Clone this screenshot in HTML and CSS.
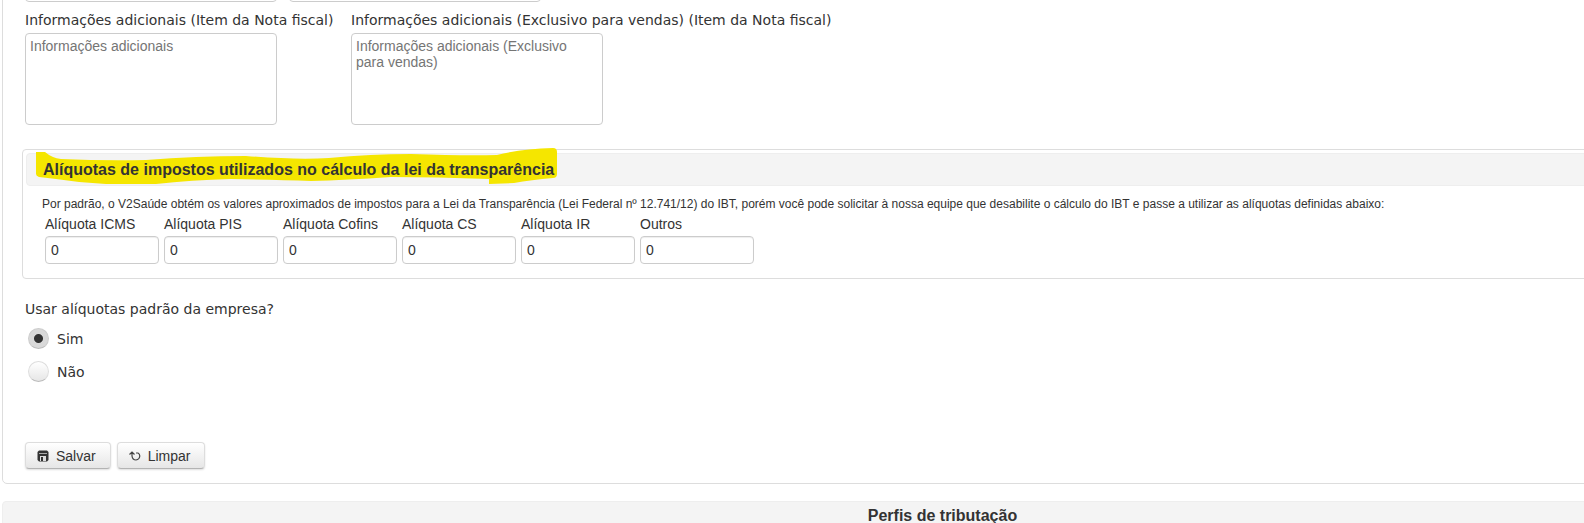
FILE: index.html
```
<!DOCTYPE html>
<html lang="pt-BR">
<head>
  <meta charset="UTF-8">
  <meta name="viewport" content="width=device-width, initial-scale=1.0">
  <title>Perfil de tributação</title>
  <link rel="stylesheet" href="styles.css">
</head>
<body>
  <div class="page">
    <form class="panel">
      <div class="row top-row">
        <input type="text" class="input wide" aria-label="Código">
        <input type="text" class="input wide" aria-label="Descrição">
      </div>

      <div class="row info-row">
        <div class="field info-field">
          <label class="label" for="info">Informações adicionais (Item da Nota fiscal)</label>
          <textarea id="info" class="textarea" placeholder="Informações adicionais"></textarea>
        </div>
        <div class="field">
          <label class="label" for="info-vendas">Informações adicionais (Exclusivo para vendas) (Item da Nota fiscal)</label>
          <textarea id="info-vendas" class="textarea" placeholder="Informações adicionais (Exclusivo para vendas)"></textarea>
        </div>
      </div>

      <section class="box">
        <h2 class="box-title">
          Alíquotas de impostos utilizados no cálculo da lei da transparência
          <svg class="marker" width="524" height="38" viewBox="0 0 524 38" aria-hidden="true">
            <path d="M0 5 L9 5 Q16 11 25 12 Q70 14 110 13 Q160 9 210 9 Q260 13 293 11 Q335 7 375 7 Q430 9 461 8 Q485 2 517 1 Q521 1 521 5 L521 27 Q521 31 517 31 Q495 33 478 36 L453 37 L453 32 Q400 30 355 30 Q310 33 275 34 Q240 33 195 32 Q155 33 120 37 L70 37 Q45 36 20 32 L3 30 Q0 29 0 27 Z" fill="#f5e600"/>
          </svg>
        </h2>
        <p class="note">Por padrão, o V2Saúde obtém os valores aproximados de impostos para a Lei da Transparência (Lei Federal nº 12.741/12) do IBT, porém você pode solicitar à nossa equipe que desabilite o cálculo do IBT e passe a utilizar as alíquotas definidas abaixo:</p>
        <div class="row rates">
          <div class="field rate">
            <label for="icms">Alíquota ICMS</label>
            <input type="text" id="icms" class="input" value="0">
          </div>
          <div class="field rate">
            <label for="pis">Alíquota PIS</label>
            <input type="text" id="pis" class="input" value="0">
          </div>
          <div class="field rate">
            <label for="cofins">Alíquota Cofins</label>
            <input type="text" id="cofins" class="input" value="0">
          </div>
          <div class="field rate">
            <label for="cs">Alíquota CS</label>
            <input type="text" id="cs" class="input" value="0">
          </div>
          <div class="field rate">
            <label for="ir">Alíquota IR</label>
            <input type="text" id="ir" class="input" value="0">
          </div>
          <div class="field rate">
            <label for="outros">Outros</label>
            <input type="text" id="outros" class="input" value="0">
          </div>
        </div>
      </section>

      <fieldset class="choice">
        <legend class="label">Usar alíquotas padrão da empresa?</legend>
        <label class="option"><input type="radio" class="radio" name="padrao" value="sim" checked> Sim</label>
        <label class="option"><input type="radio" class="radio" name="padrao" value="nao"> Não</label>
      </fieldset>

      <div class="row buttons">
        <button type="button" class="btn">
          <svg width="12" height="12" viewBox="0 0 12 12" aria-hidden="true">
            <path d="M2 0.5 H10 L11.5 2 V10 L10 11.5 H2 L0.5 10 V2 Z" fill="#333"/>
            <rect x="2" y="3" width="8" height="1" fill="#aaa"/>
            <path d="M3 6 H9 V11 H3 Z" fill="#ddd"/>
            <rect x="4" y="7" width="2" height="4" fill="#333"/>
          </svg>
          Salvar
        </button>
        <button type="reset" class="btn">
          <svg width="12" height="12" viewBox="0 0 12 12" aria-hidden="true">
            <path d="M0.5 4.5 L3 2 L5.500 4.500 M3 2.500 V6 Q3.500 10 7 10 Q10.500 9.500 10.800 6 Q10.800 4 9 3 H7" fill="none" stroke="#444" stroke-width="1.200"/>
          </svg>
          Limpar
        </button>
      </div>
    </form>

    <h2 class="section-title">Perfis de tributação</h2>
  </div>
</body>
</html>
```
FILE: styles.css
```
* {
  box-sizing: border-box;
}
body {
  margin: 0;
  background-color: #fff;
  color: #333;
  font-family: Verdana, "DejaVu Sans", sans-serif;
  font-size: 14px;
  overflow: hidden;
}
/* the form is wider than the window */
.page {
  width: 119%;
  padding: 0 2px;
}
.panel {
  margin-top: -41px;
  padding: 14px 22px;
  border: 1px solid #ddd;
  border-radius: 5px;
}
.row {
  display: flex;
}
.top-row {
  gap: 12px;
}
.info-row {
  gap: 5px;
  margin-top: 8px;
}
.field {
  display: flex;
  flex-direction: column;
}
.info-field {
  width: 321px;
}
.label {
  line-height: 20px;
  padding: 0;
  white-space: nowrap;
}
.input, .textarea {
  border: 1px solid #ccc;
  border-radius: 4px;
  padding: 4px 5px;
  background-color: #fff;
  color: #333;
  font-family: Arial, "Liberation Sans", sans-serif;
  font-size: 14px;
}
.input {
  height: 28px;
  width: 100%;
  box-shadow: inset 0 1px 1px #eee;
}
.wide {
  width: 252px;
}
.textarea {
  width: 252px;
  height: 92px;
  margin-top: 3px;
  padding-left: 4px;
  line-height: 16px;
  resize: none;
}
.textarea::placeholder {
  color: #757575;
}
.box {
  margin: 24px -3px 0;
  padding: 3px 3px 14px;
  border: 1px solid #ddd;
  border-radius: 4px;
  font-family: Arial, "Liberation Sans", sans-serif;
}
.box-title, .section-title {
  margin: 0;
  background-color: #f4f4f4;
  border: 1px solid #eee;
  border-radius: 4px;
  font-family: Arial, "Liberation Sans", sans-serif;
  font-size: 16px;
}
.box-title {
  position: relative;
  isolation: isolate;
  padding-left: 16px;
  line-height: 31px;
}
/* highlighter stroke behind the title */
.marker {
  position: absolute;
  z-index: -1;
  left: 9px;
  top: -7px;
}
.note {
  margin: 10px 16px 0;
  font-size: 12px;
  line-height: 16px;
}
.rates {
  gap: 5px;
  margin: 2px 19px 0;
}
.rate {
  width: 114px;
  line-height: 20px;
  gap: 2px;
}
.choice {
  margin: 20px 0 0;
  padding: 0;
  border: 0;
}
.choice .label {
  margin-bottom: 3px;
}
.option {
  display: flex;
  align-items: center;
  gap: 8px;
  height: 33px;
  padding-left: 3px;
}
.radio {
  appearance: none;
  width: 21px;
  height: 21px;
  margin: 0;
  border: 1px solid #ddd;
  border-bottom-color: #bbb;
  border-radius: 50%;
  background: linear-gradient(#fff, #e6e6e6);
}
.radio:checked {
  border-color: #ccc;
  border-bottom-color: #bbb;
  background: radial-gradient(circle, #333 4px, #d9d9d9 5px);
}
.buttons {
  gap: 6px;
  margin-top: 54px;
}
.btn {
  display: flex;
  align-items: center;
  gap: 7px;
  height: 27px;
  padding: 0 14px 0 11px;
  border: 1px solid #ddd;
  border-bottom-color: #b3b3b3;
  border-radius: 4px;
  background: linear-gradient(#fff, #e6e6e6);
  box-shadow: 0 1px 2px #ddd;
  color: #333;
  font-family: Arial, "Liberation Sans", sans-serif;
  font-size: 14px;
}
.section-title {
  margin-top: 17px;
  line-height: 28px;
  text-align: center;
}
```
